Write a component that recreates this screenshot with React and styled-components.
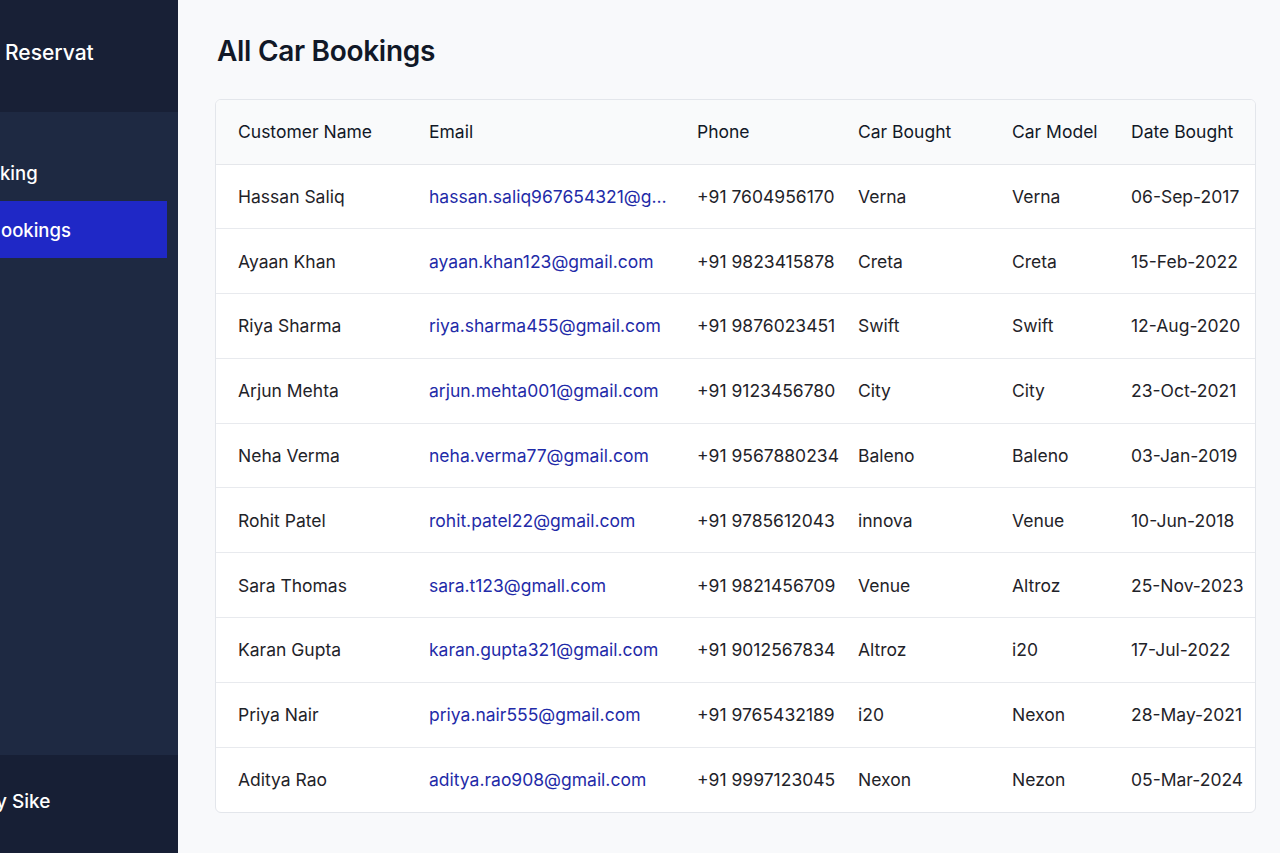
import React from 'react';
import styled, { createGlobalStyle } from 'styled-components';

const GlobalStyle = createGlobalStyle`
	html, body {
		margin: 0;
		padding: 0;
		height: 100%;
	}
	body {
		font-family: Inter, "Noto Sans", "Liberation Sans", sans-serif;
		background: #f8f9fb;
		color: #111827;
	}
`;

const Layout = styled.div`
	display: flex;
	width: 1280px;
	height: 853px;
	overflow: hidden;
`;

const Sidebar = styled.aside`
	width: 178px;
	flex-shrink: 0;
	display: flex;
	flex-direction: column;
	background: #1e2942;
	color: #ffffff;
	overflow: hidden;
`;

const Brand = styled.div`
	height: 112px;
	padding-bottom: 8px;
	box-sizing: border-box;
	display: flex;
	align-items: center;
	padding-left: 5px;
	background: #182036;
	font-size: 21px;
	font-weight: 500;
	white-space: nowrap;
`;

const Nav = styled.nav`
	flex: 1;
	display: flex;
	flex-direction: column;
	padding-top: 32px;
`;

const NavItem = styled.div`
	height: 57px;
	margin-right: 11px;
	display: flex;
	align-items: center;
	font-size: 18.5px;
	font-weight: 500;
	white-space: nowrap;
	text-indent: ${(p) => p.$indent || 0}px;
	background: ${(p) => (p.$active ? '#1f28c6' : 'transparent')};
`;

const Footer = styled.div`
	height: 98px;
	padding-bottom: 6px;
	box-sizing: border-box;
	display: flex;
	align-items: center;
	background: #171f35;
	font-size: 19px;
	font-weight: 500;
	white-space: nowrap;
	text-indent: -4px;
`;

const Main = styled.main`
	flex: 1;
	padding: 29px 26px 0 37px;
	background: #f8f9fb;
`;

const Title = styled.h1`
	margin: 0 0 26px 2px;
	font-size: 28px;
	font-weight: 600;
	letter-spacing: -0.3px;
	color: #111827;
	line-height: 44px;
`;

const Card = styled.div`
	width: 1039px;
	border: 1px solid #e3e6eb;
	border-radius: 6px;
	background: #ffffff;
	overflow: hidden;
`;

const Table = styled.table`
	width: 100%;
	border-collapse: collapse;
	table-layout: fixed;
	font-size: 17.5px;
`;

const HeadRow = styled.tr`
	height: 64px;
	background: #f9fafb;
	border-bottom: 1px solid #e5e7eb;
`;

const Row = styled.tr`
	height: 64.8px;
	border-bottom: 1px solid #e8eaee;
	&:last-child {
		border-bottom: none;
	}
`;

const Th = styled.th`
	text-align: left;
	font-weight: 400;
	color: #111827;
	padding: 0 ${(p) => p.$pr || 0}px 0 ${(p) => p.$pl || 0}px;
	white-space: nowrap;
`;

const Td = styled.td`
	color: ${(p) => (p.$link ? '#1f2ba8' : '#1f2329')};
	padding: 0 ${(p) => p.$pr || 0}px 0 ${(p) => p.$pl || 0}px;
	white-space: nowrap;
	overflow: hidden;
	text-overflow: ellipsis;
`;

const columns = [
	{ key: 'name', label: 'Customer Name', width: 213, pl: 22 },
	{ key: 'email', label: 'Email', width: 268, pr: 24, link: true },
	{ key: 'phone', label: 'Phone', width: 161 },
	{ key: 'car', label: 'Car Bought', width: 154 },
	{ key: 'model', label: 'Car Model', width: 119 },
	{ key: 'date', label: 'Date Bought', width: 124 },
];

const bookings = [
	['Hassan Saliq', 'hassan.saliq967654321@gmail.com', '+91 7604956170', 'Verna', 'Verna', '06-Sep-2017'],
	['Ayaan Khan', 'ayaan.khan123@gmail.com', '+91 9823415878', 'Creta', 'Creta', '15-Feb-2022'],
	['Riya Sharma', 'riya.sharma455@gmail.com', '+91 9876023451', 'Swift', 'Swift', '12-Aug-2020'],
	['Arjun Mehta', 'arjun.mehta001@gmail.com', '+91 9123456780', 'City', 'City', '23-Oct-2021'],
	['Neha Verma', 'neha.verma77@gmail.com', '+91 9567880234', 'Baleno', 'Baleno', '03-Jan-2019'],
	['Rohit Patel', 'rohit.patel22@gmail.com', '+91 9785612043', 'innova', 'Venue', '10-Jun-2018'],
	['Sara Thomas', 'sara.t123@gmall.com', '+91 9821456709', 'Venue', 'Altroz', '25-Nov-2023'],
	['Karan Gupta', 'karan.gupta321@gmail.com', '+91 9012567834', 'Altroz', 'i20', '17-Jul-2022'],
	['Priya Nair', 'priya.nair555@gmail.com', '+91 9765432189', 'i20', 'Nexon', '28-May-2021'],
	['Aditya Rao', 'aditya.rao908@gmail.com', '+91 9997123045', 'Nexon', 'Nezon', '05-Mar-2024'],
];

const App = () => {
	return (
		<>
			<GlobalStyle />
			<Layout>
				<Sidebar>
					<Brand>Reservat</Brand>
					<Nav>
						<NavItem>king</NavItem>
						<NavItem $active $indent={1}>
							ookings
						</NavItem>
					</Nav>
					<Footer>y Sike</Footer>
				</Sidebar>
				<Main>
					<Title>All Car Bookings</Title>
					<Card>
						<Table>
							<colgroup>
								{columns.map((c) => (
									<col key={c.key} style={{ width: c.width }} />
								))}
							</colgroup>
							<thead>
								<HeadRow>
									{columns.map((c) => (
										<Th key={c.key} $pl={c.pl} $pr={c.pr}>
											{c.label}
										</Th>
									))}
								</HeadRow>
							</thead>
							<tbody>
								{bookings.map((b) => (
									<Row key={b[1]}>
										{columns.map((c, i) => (
											<Td key={c.key} $pl={c.pl} $pr={c.pr} $link={c.link}>
												{b[i]}
											</Td>
										))}
									</Row>
								))}
							</tbody>
						</Table>
					</Card>
				</Main>
			</Layout>
		</>
	);
};

export default App;
